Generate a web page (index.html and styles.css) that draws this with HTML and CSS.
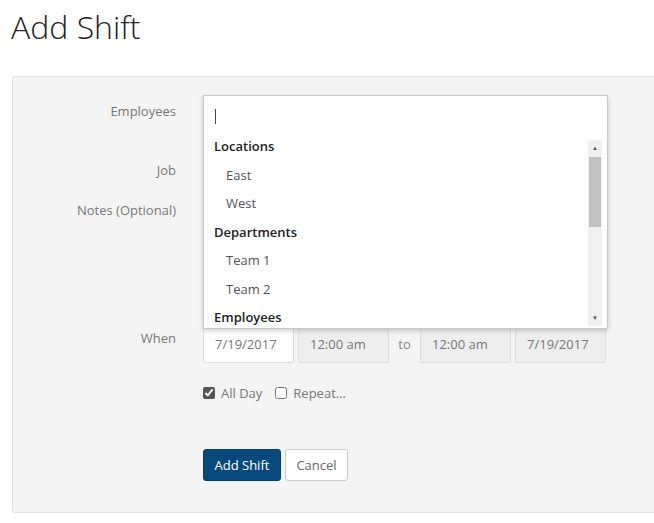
FILE: index.html
```html
<!DOCTYPE html>
<html lang="en">
<head>
  <meta charset="UTF-8" />
  <title>Add Shift</title>
  <link rel="stylesheet" href="styles.css">
</head>
<body>

  <h1 class="page-title">Add Shift</h1>

  <div class="form-panel">

    <div class="form-row row-employees">
      <label class="form-label">Employees</label>
      <div class="combo">
        <div class="combo-field"></div>

        <div class="combo-dropdown">
          <div class="combo-search"><span class="caret"></span></div>
          <div class="combo-results">
            <ul class="result-list">
              <li class="group-head">Locations</li>
              <li class="option">East</li>
              <li class="option">West</li>
              <li class="group-head">Departments</li>
              <li class="option">Team 1</li>
              <li class="option">Team 2</li>
              <li class="group-head">Employees</li>
            </ul>
            <div class="scrollbar">
              <span class="scroll-btn">&#9650;</span>
              <div class="scroll-track"><div class="scroll-thumb"></div></div>
              <span class="scroll-btn">&#9660;</span>
            </div>
          </div>
        </div>
      </div>
    </div>

    <div class="form-row row-job">
      <label class="form-label">Job</label>
      <div class="field"></div>
    </div>

    <div class="form-row row-notes">
      <label class="form-label">Notes (Optional)</label>
      <div class="field notes-field"></div>
    </div>

    <div class="form-row row-when">
      <label class="form-label">When</label>
      <div class="when-group">
        <input class="when-input" type="text" value="7/19/2017">
        <input class="when-input disabled" type="text" value="12:00 am" disabled>
        <span class="when-to">to</span>
        <input class="when-input disabled" type="text" value="12:00 am" disabled>
        <input class="when-input disabled" type="text" value="7/19/2017" disabled>
      </div>
    </div>

    <div class="form-row row-options">
      <span class="form-label"></span>
      <div class="options">
        <label class="check"><input type="checkbox" checked> All Day</label>
        <label class="check"><input type="checkbox"> Repeat...</label>
      </div>
    </div>

    <div class="form-row row-actions">
      <span class="form-label"></span>
      <div class="actions">
        <button class="btn btn-primary">Add Shift</button>
        <button class="btn btn-default">Cancel</button>
      </div>
    </div>

  </div>

</body>
</html>
```

FILE: styles.css
```css
* {
  box-sizing: border-box;
}
html, body {
  overflow: hidden;
}
body {
  margin: 0;
  font-family: 'Open Sans', 'Liberation Sans', sans-serif;
  font-size: 13px;
  color: #333;
  background: #fff;
}
.page-title {
  margin: 0;
  padding: 5px 0 0 11px;
  height: 76px;
  font-size: 32px;
  font-weight: 300;
  color: #222;
  line-height: 44px;
}
.form-panel {
  margin-left: 12px;
  width: 680px;
  padding: 18px 0 31px 0;
  background: #f4f4f4;
  border: 1px solid #e2e2e2;
  border-radius: 2px;
}
.form-row {
  display: grid;
  grid-template-columns: 190px 1fr;
}
.form-label {
  padding: 6px 27px 0 0;
  text-align: right;
  color: #777;
  line-height: 20px;
}

/* rows */
.row-employees {
  margin-bottom: 25px;
}
.row-job {
  margin-bottom: 6px;
}
.row-notes {
  margin-bottom: 24px;
}
.row-when .form-label {
  padding-top: 0;
}
.row-options {
  margin-top: 21px;
}
.row-actions {
  margin-top: 47px;
}

.field {
  width: 405px;
  height: 34px;
  background: #fff;
  border: 1px solid #ddd;
  border-radius: 2px;
}
.notes-field {
  height: 110px;
}

/* employees combo */
.combo {
  position: relative;
  width: 405px;
  height: 34px;
}
.combo-field {
  height: 34px;
  background: #fff;
  border: 1px solid #ccc;
}
.combo-dropdown {
  position: absolute;
  top: 0;
  left: 0;
  width: 405px;
  z-index: 10;
  background: #fff;
  border: 1px solid #c8c8c8;
  border-radius: 2px;
  box-shadow: 0 2px 5px rgba(0, 0, 0, 0.18);
}
.combo-search {
  height: 36px;
  padding: 13px 0 0 11px;
}
.caret {
  display: block;
  width: 1px;
  height: 15px;
  background: #444;
}
.combo-results {
  display: flex;
  height: 196px;
  overflow: hidden;
}
.result-list {
  flex: 1;
  list-style: none;
  margin: 0;
  padding: 0;
}
.result-list li {
  height: 28.5px;
  line-height: 28px;
  white-space: nowrap;
}
.group-head {
  padding-left: 10px;
  font-weight: 600;
  color: #222;
}
.option {
  padding-left: 22px;
  color: #555;
}
.scrollbar {
  width: 14px;
  margin: 8px 5px 2px 0;
  display: flex;
  flex-direction: column;
  background: #f0f0f0;
}
.scroll-btn {
  height: 16px;
  font-size: 6px;
  line-height: 16px;
  text-align: center;
  color: #555;
}
.scroll-track {
  flex: 1;
}
.scroll-thumb {
  margin: 1px 1px 0 1px;
  height: 70px;
  background: #c1c1c1;
}

/* when */
.when-group {
  display: flex;
  align-items: center;
}
.when-input {
  width: 91px;
  height: 35px;
  margin-right: 4px;
  padding: 0 4px 4px 11px;
  font-family: inherit;
  font-size: 13px;
  color: #777;
  background: #fff;
  border: 1px solid #ddd;
  border-radius: 2px;
  outline: none;
}
.when-input.disabled {
  background: #eee;
}
.when-to {
  width: 23px;
  margin: 0 4px 0 0;
  padding-bottom: 4px;
  text-align: center;
  color: #888;
}

/* options */
.options {
  display: flex;
  gap: 13px;
  color: #777;
  line-height: 18px;
}
.check {
  display: flex;
  align-items: center;
}
.check input {
  width: 12px;
  height: 12px;
  margin: 0 6px 0 0;
  accent-color: #555;
}

/* buttons */
.actions {
  display: flex;
  gap: 4px;
}
.btn {
  height: 32px;
  padding: 0 10.5px;
  font-family: inherit;
  font-size: 13px;
  border-radius: 3px;
  cursor: pointer;
}
.btn-primary {
  background: #084a7c;
  border: 1px solid #063e69;
  color: #fff;
}
.btn-default {
  background: #fff;
  border: 1px solid #ccc;
  color: #666;
}
```
